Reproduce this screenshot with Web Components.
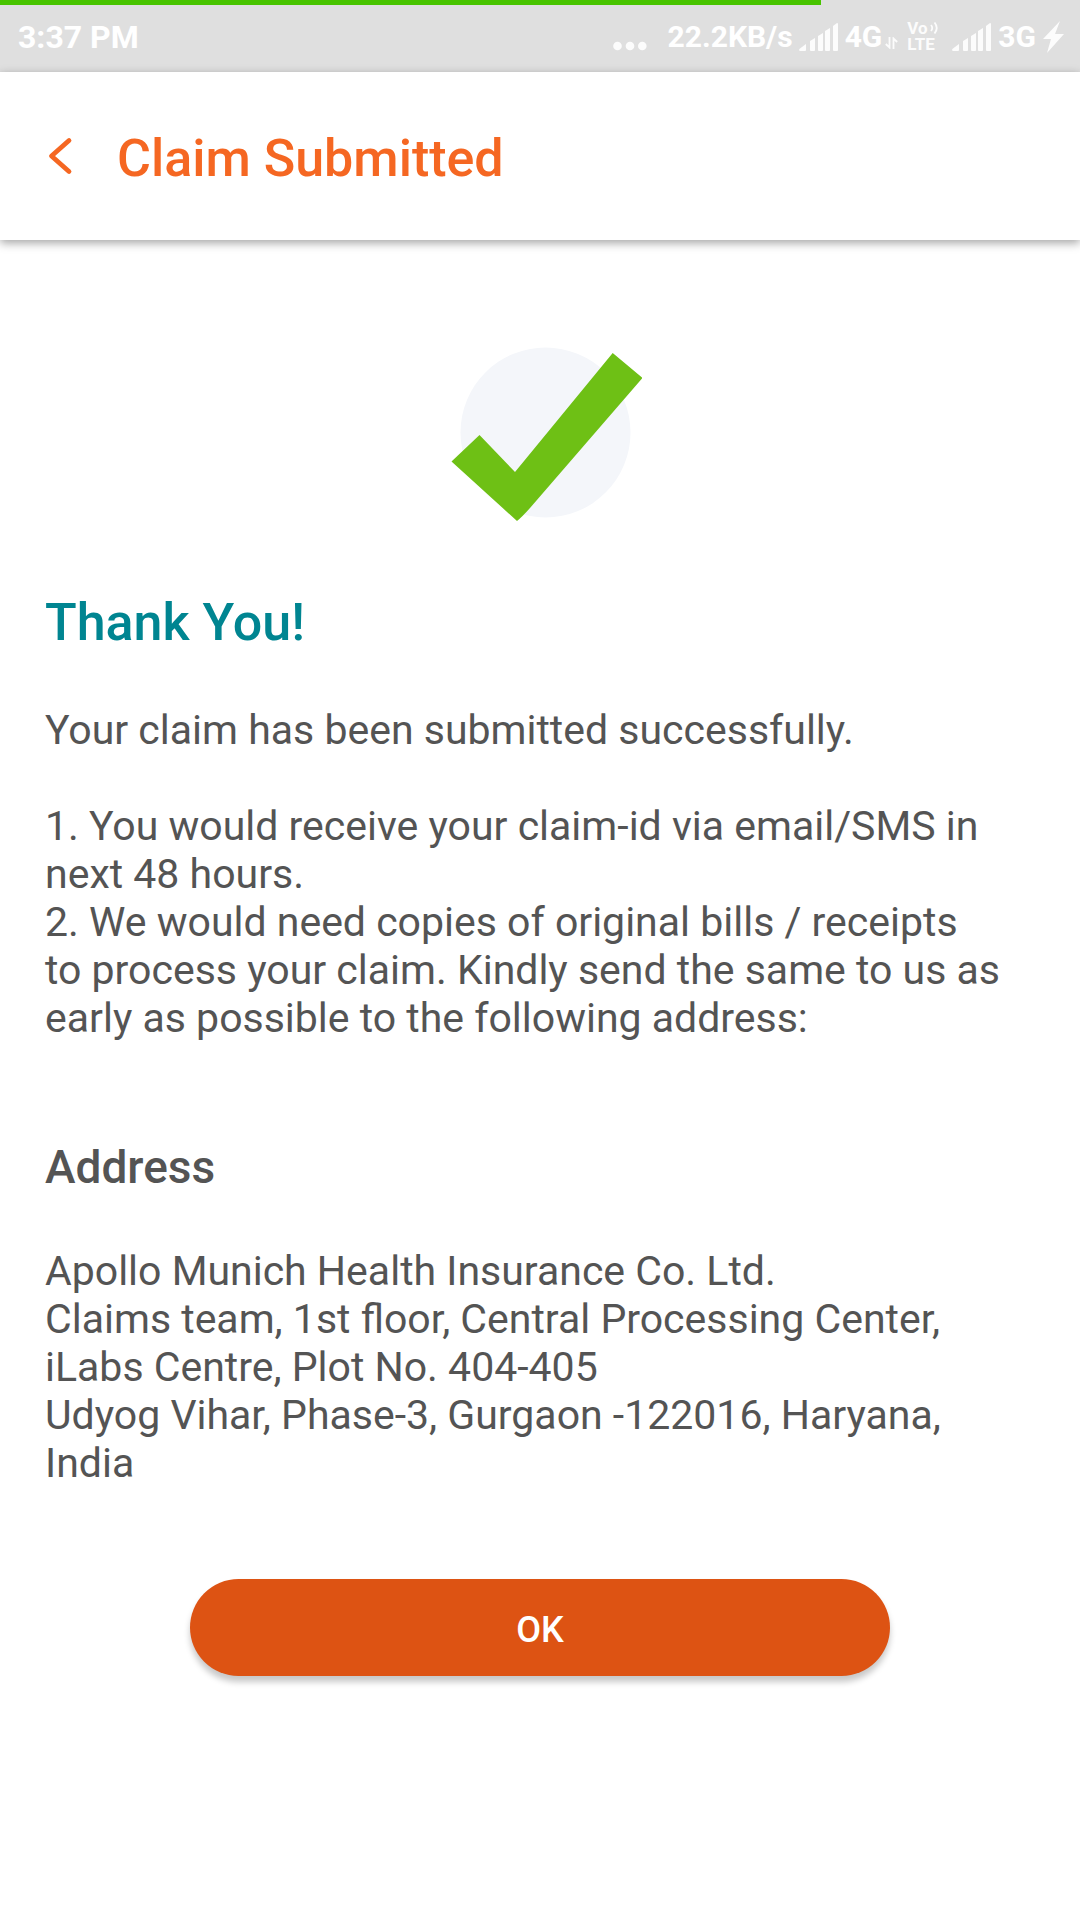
<!DOCTYPE html>
<html lang="en">
<head>
<meta charset="utf-8">
<meta name="viewport" content="width=device-width, initial-scale=1">
<title>Claim Submitted</title>
<style>
  body { margin: 0; background: #fff; color: #545454; font-family: Roboto, "Noto Sans", sans-serif; }
</style>
</head>
<body>
<claim-screen></claim-screen>
<script>
class BaseElement extends HTMLElement {
  constructor() {
    super();
    this.attachShadow({ mode: "open" }).innerHTML = this.constructor.markup;
  }
}

/* Five-step mobile signal meter */
class SignalBars extends BaseElement {
  static markup = `
    <style>:host { display: block; } svg { display: block; }</style>
    <svg width="40" height="28" viewBox="0 0 40 28" fill="#fcfcfc" aria-hidden="true">
      <path d="M1 28Q-1 27 1 25.500L7 21V27Q7 28 6 28Z"/>
      <path d="M11 18L16 15V27Q16 28 15 28H12Q11 28 11 27Z"/>
      <path d="M19 13L24 10V27Q24 28 23 28H20Q19 28 19 27Z"/>
      <path d="M26 8L31 5V27Q31 28 30 28H27Q26 28 26 27Z"/>
      <path d="M34 3L38 0Q39 0 39 1V27Q39 28 38 28H35Q34 28 34 27Z"/>
    </svg>`;
}
customElements.define("signal-bars", SignalBars);

class VolteBadge extends BaseElement {
  static markup = `
    <style>
      :host { display: block; width: 32px; font-size: 17px; line-height: 16px; font-weight: 700; color: #fcfcfc; }
      .voice { display: flex; align-items: center; gap: 2px; }
      .data { display: block; }
      svg { display: block; }
    </style>
    <div class="voice"><span>Vo</span><svg width="8" height="12" viewBox="0 0 8 12" fill="none" stroke="#fcfcfc" stroke-width="1.800" aria-hidden="true"><path d="M1 3Q3.500 6 1 9M4.500 .5Q9 6 4.500 11.500"/></svg></div>
    <span class="data">LTE</span>`;
}
customElements.define("volte-badge", VolteBadge);

class StatusBar extends BaseElement {
  static markup = `
    <style>
      :host { display: flex; position: relative; box-sizing: border-box; height: 72px; padding: 2px 16px 0 18px;
              align-items: center; justify-content: space-between; background: #dfdfdf; color: #fff;
              font-size: 30px; line-height: 36px; font-weight: 700; }
      .progress { position: absolute; inset: 0 24% auto 0; height: 5px; background: #48c400; }
      .time { font-size: 32px; }
      .icons, .group { display: flex; align-items: center; }
      .group { gap: 6px; }
      .dots { margin: 18px 21px 0 0; }
      .arrows { margin: 12px 9px 0 3px; }
      volte-badge { margin: 0 13px 2px 0; }
      .bolt { margin-left: 7px; }
      svg { display: block; }
    </style>
    <div class="progress"></div>
    <span class="time">3:37 PM</span>
    <div class="icons">
      <svg class="dots" width="34" height="10" viewBox="0 0 34 10" fill="#fcfcfc" aria-hidden="true"><circle cx="4.500" cy="5" r="4.300"/><circle cx="17" cy="5" r="4.300"/><circle cx="29.300" cy="5" r="4.300"/></svg>
      <div class="group"><span>22.2KB/s</span><signal-bars></signal-bars><span>4G</span></div>
      <svg class="arrows" width="13" height="12" viewBox="0 0 13 12" fill="none" stroke="#fcfcfc" stroke-width="1.800" aria-hidden="true"><path d="M4.500 0V10.500L.8 7M8.500 12V1.500L12.200 5"/></svg>
      <volte-badge></volte-badge>
      <div class="group"><signal-bars></signal-bars><span>3G</span></div>
      <svg class="bolt" width="21" height="32" viewBox="0 0 21 32" fill="#fcfcfc" aria-hidden="true"><path d="M17 0L0 18H8L4 32L21 13H12Z"/></svg>
    </div>`;
}
customElements.define("status-bar", StatusBar);

class AppHeader extends BaseElement {
  static markup = `
    <style>
      :host { display: flex; position: relative; box-sizing: border-box; height: 168px; padding: 0 45px; align-items: center;
              gap: 42px; background: #fff; color: #f56722; box-shadow: 0 3px 9px rgba(0,0,0,.36); }
      button { all: unset; display: block; cursor: pointer; }
      svg { display: block; }
      h1 { margin: 5px 0 0; font-size: 52px; line-height: 60px; font-weight: 500; }
    </style>
    <button type="button" aria-label="Back">
      <svg width="30" height="38" viewBox="0 0 30 38" fill="none" stroke="currentColor" stroke-width="4.800" stroke-linecap="round" stroke-linejoin="round"><path d="M24 3.500L6.500 19L24 34.500"/></svg>
    </button>
    <h1><slot></slot></h1>`;
}
customElements.define("app-header", AppHeader);

class SuccessMark extends BaseElement {
  static markup = `
    <style>:host { display: flex; justify-content: center; } svg { display: block; }</style>
    <svg width="204" height="174" viewBox="0 0 204 174" role="img" aria-label="Success">
      <circle cx="107.500" cy="85.500" r="85" fill="#f4f6fa"/>
      <path d="M174.700 6L204.500 31L92 161Q84 170 79 174L13.500 114.500L41.500 88L77 125Z" fill="#6ec015"/>
    </svg>`;
}
customElements.define("success-mark", SuccessMark);

class PillButton extends BaseElement {
  static markup = `
    <style>
      :host { display: flex; justify-content: center; }
      button { width: 100%; max-width: 700px; border: 0; border-radius: 49px; padding: 30px 0 25px; background: #dd5313;
               color: #fff; font: 500 36px/42px Roboto, "Noto Sans", sans-serif; cursor: pointer;
               box-shadow: 0 6px 6px rgba(0,0,0,.22); }
    </style>
    <button type="button"><slot></slot></button>`;
}
customElements.define("pill-button", PillButton);

class ClaimScreen extends BaseElement {
  static markup = `
    <style>
      :host { display: block; }
      main { padding: 107px 45px 60px; font-size: 41px; line-height: 48px; }
      h2, h3, p, ol, address { margin: 0; padding: 0; font-style: normal; }
      h2 { margin: 72px 0 53px; color: #008591; font-size: 52px; line-height: 60px; font-weight: 500; }
      ol { margin-top: 48px; list-style: none; }
      h3 { margin: 98px 0 53px; font-size: 46px; line-height: 54px; font-weight: 500; }
      pill-button { margin-top: 92px; }
    </style>
    <status-bar></status-bar>
    <app-header>Claim Submitted</app-header>
    <main>
      <success-mark></success-mark>
      <h2>Thank You!</h2>
      <p>Your claim has been submitted successfully.</p>
      <ol>
        <li>1. You would receive your claim-id via email/SMS in<br>next 48 hours.</li>
        <li>2. We would need copies of original bills / receipts<br>to process your claim. Kindly send the same to us as<br>early as possible to the following address:</li>
      </ol>
      <h3>Address</h3>
      <address>Apollo Munich Health Insurance Co. Ltd.<br>Claims team, 1st floor, Central Processing Center,<br>iLabs Centre, Plot No. 404-405<br>Udyog Vihar, Phase-3, Gurgaon -122016, Haryana,<br>India</address>
      <pill-button>OK</pill-button>
    </main>`;
}
customElements.define("claim-screen", ClaimScreen);
</script>
</body>
</html>
